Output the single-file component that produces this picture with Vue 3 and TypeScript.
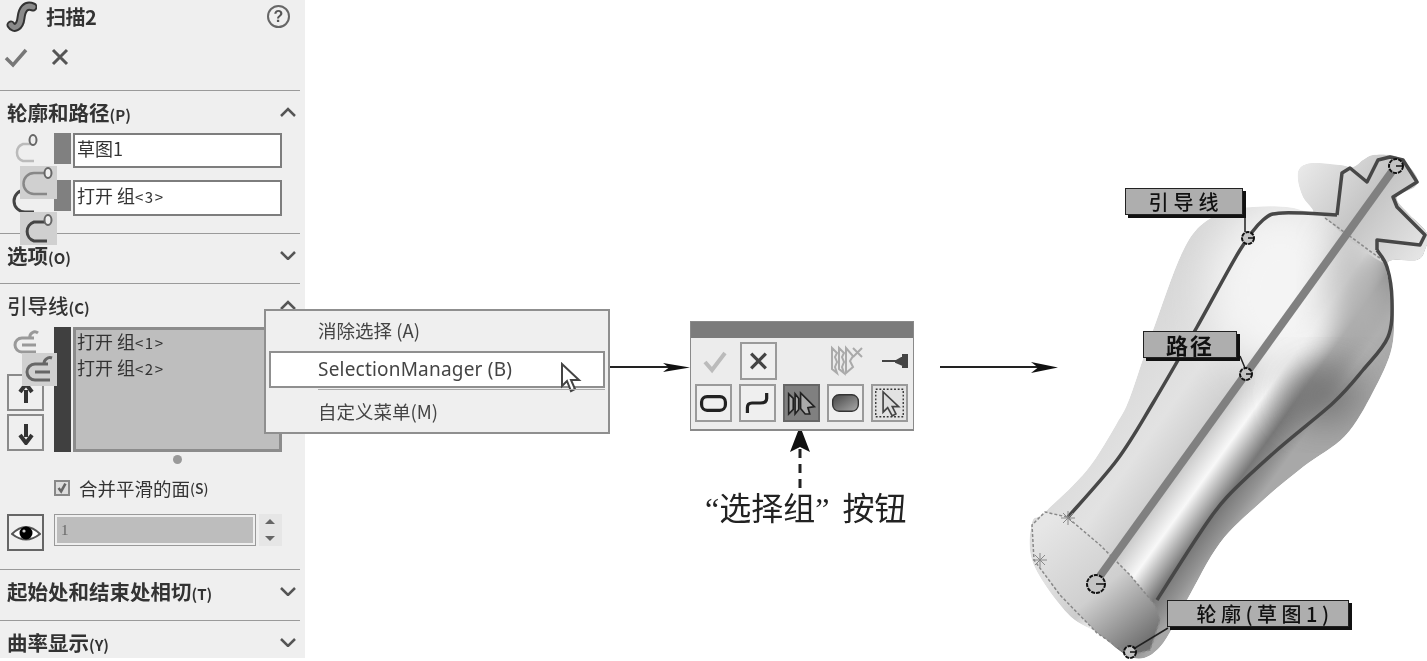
<script setup lang="ts">
type Pt = [number, number]
interface Tag { text: string; cls: string }

function smooth(pts: Pt[], closed = false): string {
  const n = pts.length
  const at = (i: number): Pt => (closed ? pts[(i + n) % n] : pts[Math.max(0, Math.min(n - 1, i))])
  let d = `M${pts[0][0]} ${pts[0][1]}`
  const end = closed ? n : n - 1
  for (let i = 0; i < end; i++) {
    const [p0, p1, p2, p3] = [at(i - 1), at(i), at(i + 1), at(i + 2)]
    const c1: Pt = [p1[0] + (p2[0] - p0[0]) / 6, p1[1] + (p2[1] - p0[1]) / 6]
    const c2: Pt = [p2[0] - (p3[0] - p1[0]) / 6, p2[1] - (p3[1] - p1[1]) / 6]
    d += ` C${c1[0].toFixed(1)} ${c1[1].toFixed(1)} ${c2[0].toFixed(1)} ${c2[1].toFixed(1)} ${p2[0]} ${p2[1]}`
  }
  return d + (closed ? ' Z' : '')
}

const tags: Tag[] = [
  { text: '引导线', cls: 'tag-a' },
  { text: '路径', cls: 'tag-b' },
  { text: '轮廓(草图1)', cls: 'tag-c' },
]
const handles = [
  { x: 1396, y: 166, r: 7 },
  { x: 1248, y: 238, r: 6 },
  { x: 1246, y: 374, r: 6 },
  { x: 1096, y: 584, r: 9 },
  { x: 1130, y: 652, r: 6 },
]
const silhouette = smooth([
  [1313, 212], [1303, 197], [1298, 180], [1300, 168], [1313, 163], [1340, 165], [1353, 167], [1363, 160],
  [1373, 155], [1390, 155], [1403, 160], [1417, 177], [1415, 187], [1397, 197], [1407, 212], [1427, 233],
  [1425, 250], [1417, 260], [1387, 263], [1393, 300], [1392, 347], [1373, 392], [1345, 436], [1303, 467],
  [1260, 503], [1220, 543], [1187, 600], [1160, 647], [1133, 658], [1097, 633], [1067, 613], [1033, 563],
  [1032, 523], [1045, 512], [1087, 470], [1117, 423], [1130, 397], [1153, 330], [1187, 243], [1220, 213],
  [1253, 207], [1287, 207],
], true)
const lip = smooth([
  [1313, 212], [1303, 197], [1298, 180], [1300, 168], [1313, 163], [1340, 165], [1353, 167], [1363, 160],
  [1373, 155], [1390, 155], [1403, 160], [1417, 177], [1415, 187], [1397, 197], [1407, 212], [1427, 233],
  [1425, 250], [1417, 260], [1387, 264], [1350, 240], [1325, 218],
], true)
const guideLeft = smooth([[1068, 517], [1117, 460], [1153, 403], [1197, 327], [1240, 250], [1263, 220], [1283, 213], [1337, 215]])
const guideLip = 'M1337 215 L1342 173 L1350 168 L1367 182 L1378 160 L1390 157 L1403 160 L1417 182 L1393 197 L1397 207 L1425 235 L1420 245 L1377 240 L1377 250'
const guideRight = smooth([[1377, 250], [1387, 267], [1392, 300], [1388, 337], [1363, 370], [1333, 403], [1277, 450], [1227, 497], [1200, 533], [1157, 600]])
const capEdge = 'M1067 517 L1045 512 L1032 525 L1034 560 L1060 595 L1097 633 L1130 655 L1150 650 L1160 620 L1155 605 L1130 575 L1100 545 Z'
</script>

<template>
  <div class="page">
    <aside class="panel">
      <header class="head">
        <svg class="sweep" viewBox="0 0 32 32">
          <path class="sweep-o" d="M6 25 C9 30 15 27 16 18 C17 9 21 4 28 7" />
          <path class="sweep-i" d="M6 25 C9 30 15 27 16 18 C17 9 21 4 28 7" />
        </svg>
        <span class="title">扫描2</span>
        <span class="help">?</span>
      </header>
      <div class="actions">
        <svg class="act" viewBox="0 0 24 24"><path class="ok" d="M2 13 L9 20 L22 5" /></svg>
        <svg class="act" viewBox="0 0 24 24"><path class="no" d="M4 5 L18 19 M18 5 L4 19" /></svg>
      </div>

      <section class="sec sec-profile">
        <div class="sec-head"><b>轮廓和路径<small>(P)</small></b><svg class="chev" viewBox="0 0 16 10"><path d="M1 9 L8 2 L15 9" /></svg></div>
        <div class="field-row">
          <svg class="tool" viewBox="0 0 30 30"><path class="c-light" d="M24 11 H13 A9 9 0 0 0 13 28 H24" /><ellipse class="ring" cx="23" cy="7" rx="3.5" ry="5" /></svg>
          <span class="swatch"></span>
          <span class="input">草图1</span>
        </div>
        <div class="field-row row-2">
          <svg class="tool tool-dark" viewBox="0 0 30 30"><path class="c-dark" d="M22 4 H15 A10 10 0 0 0 15 26 H24" /></svg>
          <span class="swatch"></span>
          <span class="input">打开 组<small>&lt;3&gt;</small></span>
          <svg class="ghost ghost-1" viewBox="0 0 37 33"><path class="c-mid" d="M27 7 H14 A10 10 0 0 0 14 28 H27" /><ellipse class="ring" cx="28" cy="7" rx="3.5" ry="5" /></svg>
          <svg class="ghost ghost-2" viewBox="0 0 37 33"><path class="c-dark" d="M27 10 H14 A10 10 0 0 0 14 29 H27" /><ellipse class="ring" cx="28" cy="8" rx="3.5" ry="5" /></svg>
        </div>
      </section>

      <section class="sec sec-opt">
        <div class="sec-head"><b>选项<small>(O)</small></b><svg class="chev" viewBox="0 0 16 10"><path d="M1 2 L8 9 L15 2" /></svg></div>
      </section>

      <section class="sec sec-guide">
        <div class="sec-head"><b class="thin">引导线<small>(C)</small></b><svg class="chev" viewBox="0 0 16 10"><path d="M1 9 L8 2 L15 9" /></svg></div>
        <div class="guide-body">
          <div class="side">
            <svg class="clip" viewBox="0 0 30 30"><path class="clip-l" d="M24 11 H12 A6 6 0 0 0 12 25 H26 M12 18 H26 M20 11 A5 5 0 0 1 28 6" /></svg>
            <button class="sq"><svg viewBox="0 0 20 24"><path class="arrow-i" d="M10 22 V9 M4 11 L10 3 L16 11" /></svg></button>
            <button class="sq"><svg viewBox="0 0 20 24"><path class="arrow-i" d="M10 3 V16 M4 14 L10 22 L16 14" /></svg></button>
            <svg class="ghost ghost-3" viewBox="0 0 35 33"><path class="clip-d" d="M26 11 H13 A7 7 0 0 0 13 27 H28 M13 19 H28 M22 11 A6 6 0 0 1 30 5" /></svg>
          </div>
          <span class="bar"></span>
          <div class="list"><div>打开 组<small>&lt;1&gt;</small></div><div>打开 组<small>&lt;2&gt;</small></div></div>
        </div>
        <span class="dot"></span>
        <label class="check"><span class="box"><svg viewBox="0 0 14 14"><path d="M3 7 L6 11 L11 2" /></svg></span>合并平滑的面<small>(S)</small></label>
        <div class="eye-row">
          <button class="sq eye"><svg viewBox="0 0 30 20"><path class="eye-w" d="M1 11 Q15 -3 29 11 Q15 22 1 11 Z" /><circle cx="15" cy="10" r="6.5" /><circle class="glint" cx="13" cy="8" r="1.6" /></svg></button>
          <span class="spin-input">1</span>
          <span class="spin"><i class="up"></i><i class="down"></i></span>
        </div>
      </section>

      <section class="sec sec-tan">
        <div class="sec-head"><b>起始处和结束处相切<small>(T)</small></b><svg class="chev" viewBox="0 0 16 10"><path d="M1 2 L8 9 L15 2" /></svg></div>
      </section>
      <section class="sec sec-curv">
        <div class="sec-head"><b>曲率显示<small>(Y)</small></b><svg class="chev" viewBox="0 0 16 10"><path d="M1 2 L8 9 L15 2" /></svg></div>
      </section>
    </aside>

    <main class="canvas">
      <div class="menu">
        <div class="item">消除选择 (A)</div>
        <div class="item hot">SelectionManager (B)
          <svg class="cursor" viewBox="0 0 22 32"><path d="M2 2 V24 L7 19 L11 29 L15 27 L11 18 L19 18 Z" /></svg>
        </div>
        <div class="item last">自定义菜单(M)</div>
      </div>

      <svg class="arrows" viewBox="0 0 1122 661">
        <path class="a-line" d="M305 367 H375" />
        <path class="a-head" d="M358 363 L385 367.500 L358 372 L364 367.500 Z" />
        <path class="a-line" d="M635 367 H735" />
        <path class="a-head" d="M726 362 L753 367.500 L726 373 L733 367.500 Z" />
        <path class="a-dash" d="M495 488 V448" />
        <path class="a-head" d="M495 426 L505 452 L495 447 L485 452 Z" />
      </svg>

      <div class="bar-tool">
        <div class="bar-top"></div>
        <div class="bar-row">
          <svg class="ti ti-ok" viewBox="0 0 36 36"><path d="M8 19 L15 27 L28 10" /></svg>
          <span class="tb x"><svg viewBox="0 0 36 36"><path d="M10 10 L26 26 M26 10 L10 26" /></svg></span>
          <svg class="ti ti-multi" viewBox="0 0 36 36"><path d="M3 5 L8 10 L6 14 L8 19 L6 24 L8 30 L3 26 Z M10 5 L15 10 L13 14 L15 19 L13 24 L15 30 L10 26 Z M17 5 L24 13 L21 18 L24 24 L17 30 Z M24 5 L33 14 M33 5 L24 14" /></svg>
          <svg class="ti ti-pin" viewBox="0 0 36 36"><path class="pin" d="M2 18 H16 M16 18 L23 14 V12 H27 V24 H23 V22 L16 19 Z" /></svg>
        </div>
        <div class="bar-row row-b">
          <span class="tb"><svg viewBox="0 0 36 36"><rect class="rr" x="5" y="11" width="26" height="15" rx="6" /></svg></span>
          <span class="tb"><svg viewBox="0 0 36 36"><path class="rr-s" d="M7 29 V23 Q7 18 12 18 H21 Q28 18 28 13 V7" /></svg></span>
          <span class="tb on"><svg viewBox="0 0 36 36"><path class="multi" d="M4 8 L9 13 V25 L4 30 Z M11 8 L15 13 V25 L11 30 Z M17 7 L32 22 L25 23 L27 30 L22 30 L17 24 Z" /></svg></span>
          <span class="tb"><svg viewBox="0 0 36 36"><defs><linearGradient id="solid" x1="0" y1="0" x2="1" y2="1"><stop offset="0" stop-color="#444" /><stop offset="1" stop-color="#aaa" /></linearGradient></defs><rect class="rr-f" x="4" y="9" width="28" height="18" rx="7" fill="url(#solid)" /></svg></span>
          <span class="tb sel"><svg viewBox="0 0 36 36"><rect class="dash" x="3" y="3" width="30" height="30" /><path class="ptr" d="M11 6 V28 L16 23 L21 32 L25 30 L21 22 L28 22 Z" /></svg></span>
        </div>
      </div>
      <div class="caption">“选择组” 按钮</div>

      <svg class="vase" viewBox="1020 150 407 511">
        <defs>
          <linearGradient id="body" gradientUnits="userSpaceOnUse" x1="1130" y1="320" x2="1300" y2="442">
            <stop offset="0" stop-color="#d6d6d6" />
            <stop offset=".4" stop-color="#e2e2e2" />
            <stop offset=".62" stop-color="#cccccc" />
            <stop offset=".73" stop-color="#f8f8f8" />
            <stop offset=".87" stop-color="#787878" />
            <stop offset=".95" stop-color="#939393" />
            <stop offset="1" stop-color="#a8a8a8" />
          </linearGradient>
          <linearGradient id="cap" gradientUnits="userSpaceOnUse" x1="1050" y1="520" x2="1150" y2="640">
            <stop offset="0" stop-color="#e6e6e6" />
            <stop offset=".55" stop-color="#cfcfcf" />
            <stop offset="1" stop-color="#707070" />
          </linearGradient>
          <linearGradient id="lip" gradientUnits="userSpaceOnUse" x1="1300" y1="170" x2="1420" y2="260">
            <stop offset="0" stop-color="#e8e8e8" />
            <stop offset=".5" stop-color="#c4c4c4" />
            <stop offset="1" stop-color="#e6e6e6" />
          </linearGradient>
          <clipPath id="clip-vase"><path :d="silhouette" /></clipPath>
          <filter id="soft" x="-60%" y="-60%" width="220%" height="220%"><feGaussianBlur stdDeviation="20" /></filter>
        </defs>
        <g clip-path="url(#clip-vase)">
          <path :d="silhouette" fill="url(#body)" />
          <ellipse cx="1280" cy="290" rx="70" ry="85" fill="#f4f4f4" filter="url(#soft)" />
          <ellipse cx="1362" cy="295" rx="30" ry="60" fill="#b4b4b4" filter="url(#soft)" />
          <ellipse cx="1325" cy="395" rx="36" ry="26" fill="#707070" filter="url(#soft)" />
          <path :d="lip" fill="url(#lip)" />
          <path :d="capEdge" fill="url(#cap)" />
        </g>
        <path class="cap-dot" :d="capEdge" />
        <path class="cap-dot" d="M1325 218 L1385 262" />
        <path class="path-line" d="M1100 576 L1393 170" />
        <path class="guide-line" :d="guideLeft" />
        <path class="guide-line" :d="guideLip" />
        <path class="guide-line" :d="guideRight" />
        <path class="leader" d="M1245 213 V232 M1240 356 L1245 368 M1168 628 L1135 648" />
        <path class="star" d="M1061 518 L1075 518 M1068 511 L1068 525 M1063 513 L1073 523 M1073 513 L1063 523 M1033 560 L1047 560 M1040 553 L1040 567 M1035 555 L1045 565 M1045 555 L1035 565" />
        <g v-for="h in handles" :key="h.x">
          <circle class="handle" :cx="h.x" :cy="h.y" :r="h.r" />
          <path class="tick" :d="`M${h.x} ${h.y} h${h.r}`" />
        </g>
      </svg>
      <div v-for="t in tags" :key="t.text" class="tag" :class="t.cls">{{ t.text }}</div>
    </main>
  </div>
</template>

<style scoped>
.page { position: relative; display: flex; width: 1427px; height: 661px; overflow: hidden; background: #fff; font-family: "Noto Sans CJK SC", "Noto Sans", sans-serif; color: #333; filter: blur(0.5px); }
.panel { width: 305px; height: 658px; flex: none; background: #efefef; box-sizing: border-box; overflow: hidden; }
.head { display: flex; align-items: center; height: 32px; padding: 0 15px 0 5px; }
.sweep { width: 32px; height: 32px; margin-right: 9px; }
.sweep-o { fill: none; stroke: #333; stroke-width: 9; stroke-linecap: round; }
.sweep-i { fill: none; stroke: #8a8a8a; stroke-width: 5; stroke-linecap: round; }
.title { flex: 1; font-size: 20px; font-weight: 700; letter-spacing: -.5px; }
.help { width: 19px; height: 19px; border: 2px solid #666; border-radius: 50%; text-align: center; font: 700 16px/19px "Liberation Sans", sans-serif; color: #555; }
.actions { display: flex; gap: 21px; padding: 13px 0 0 4px; box-sizing: border-box; border-bottom: 1px solid #9a9a9a; margin-right: 5px; height: 59px; }
.act { width: 24px; height: 24px; }
.ok { fill: none; stroke: #777; stroke-width: 3.500; }
.no { fill: none; stroke: #555; stroke-width: 3; }
.sec { border-bottom: 1px solid #9a9a9a; margin-right: 5px; position: relative; box-sizing: border-box; }
.sec-head { display: flex; align-items: center; justify-content: space-between; padding: 0 4px 0 7px; height: 42px; font-size: 20.500px; letter-spacing: 0; color: #333; white-space: nowrap; }
.sec-head b { font-weight: 700; }
.sec-head b.thin { font-weight: 500; }
.sec-head small { font-size: 15px; font-weight: 700; letter-spacing: 0; }
.chev { width: 16px; height: 10px; }
.chev path { fill: none; stroke: #555; stroke-width: 2.500; }
.sec-profile { height: 143px; }
.sec-opt { height: 50px; }
.sec-guide { height: 286px; }
.sec-tan { height: 51px; }
.sec-curv { height: 38px; border-bottom: 0; }
.field-row { display: flex; position: relative; height: 35px; padding-left: 10px; }
.row-2 { margin-top: 12px; height: 36px; }
.tool { width: 30px; height: 30px; margin-right: 14px; }
.tool-dark { margin-top: 6px; }
.c-light, .c-mid, .c-dark, .clip-l, .clip-d { fill: none; stroke-width: 2.500; }
.c-light { stroke: #bbb; }
.c-mid { stroke: #888; }
.c-dark { stroke: #444; stroke-width: 3; }
.ring { fill: #eee; stroke: #666; stroke-width: 2; }
.clip-l { stroke: #999; stroke-width: 3; }
.clip-d { stroke: #666; stroke-width: 3; }
.swatch { width: 17px; height: 31px; background: #808080; margin-right: 2px; flex: none; }
.input { width: 209px; box-sizing: border-box; border: 2px solid #7d7d7d; background: #fff; padding-left: 2px; font-size: 18px; line-height: 27px; color: #333; white-space: nowrap; }
.input small, .list small { font-size: 15px; letter-spacing: 1.500px; }
.ghost { position: absolute; background: #d0d0d0; }
.ghost-1 { left: 20px; top: -14px; width: 37px; height: 33px; }
.ghost-2 { left: 20px; top: 32px; width: 37px; height: 33px; }
.ghost-3 { left: 15px; top: 26px; width: 35px; height: 33px; }
.guide-body { display: flex; height: 125px; position: relative; margin-top: 1px; padding-left: 7px; }
.side { width: 47px; position: relative; display: flex; flex-direction: column; gap: 3px; }
.clip { width: 30px; height: 30px; margin: 0 0 14px 3px; flex: none; }
.sq { width: 37px; height: 37px; flex: none; padding: 0; box-sizing: border-box; background: #efefef; border: 2px solid #8a8a8a; display: flex; align-items: center; justify-content: center; }
.sq svg { width: 20px; height: 24px; }
.arrow-i { fill: none; stroke: #333; stroke-width: 4; }
.bar { width: 17px; background: #404040; margin-right: 2px; }
.list { width: 209px; box-sizing: border-box; background: #bebebe; border: 3px solid #8c8c8c; padding: 0 0 0 1px; font-size: 18px; color: #333; white-space: nowrap; }
.list div { height: 26px; line-height: 22px; }
.dot { display: block; width: 9px; height: 9px; border-radius: 50%; background: #999; margin: 3px 0 0 173px; }
.check { display: flex; align-items: center; margin: 12px 0 0 54px; height: 24px; font-size: 18.500px; color: #333; white-space: nowrap; }
.check small { font-size: 14px; font-weight: 500; }
.box { width: 16px; height: 16px; box-sizing: border-box; border: 2px solid #888; background: #ddd; margin-right: 9px; }
.box svg { display: block; width: 12px; height: 12px; }
.box path { fill: none; stroke: #666; stroke-width: 3; }
.eye-row { display: flex; align-items: flex-start; margin: 14px 0 0 7px; }
.eye { border-width: 2px; border-color: #666; margin-right: 10px; }
.eye svg { width: 30px; height: 20px; }
.eye-w { fill: #fff; stroke: #555; stroke-width: 2; }
.glint { fill: #ccc; }
.spin-input { width: 202px; height: 32px; box-sizing: border-box; background: #bdbdbd; border: 3px solid #efefef; outline: 1px solid #999; outline-offset: -1px; padding-left: 4px; font: 15px/26px "Liberation Serif", serif; color: #666; }
.spin { width: 23px; height: 32px; margin-left: 3px; display: flex; flex-direction: column; background: #e6e6e6; gap: 2px; }
.spin i { flex: 1; position: relative; }
.spin i::after { content: ""; position: absolute; left: 6px; top: 5px; border-left: 5px solid transparent; border-right: 5px solid transparent; }
.up::after { border-bottom: 5px solid #666; }
.down::after { border-top: 5px solid #666; }

.canvas { position: relative; flex: 1; }
.menu { position: absolute; left: -41px; top: 309px; width: 346px; height: 125px; box-sizing: border-box; background: #efefef; border: 2px solid #8f8f8f; padding: 0 3px; color: #444; font-size: 18.500px; z-index: 2; white-space: nowrap; }
.item { height: 38px; line-height: 38px; padding-left: 49px; }
.hot { position: relative; height: 37px; line-height: 33px; background: #fff; border: 2px solid #8f8f8f; box-sizing: border-box; padding-left: 47px; font-family: "Noto Sans", sans-serif; font-size: 19px; letter-spacing: .2px; margin-top: 2px; }
.hot::after { content: ""; position: absolute; left: 47px; right: -2px; top: 36px; height: 1px; background: #aaa; }
.last { margin-top: 4px; }
.cursor { position: absolute; right: 21px; top: 9px; width: 22px; height: 32px; }
.cursor path { fill: #fff; stroke: #444; stroke-width: 2; }
.arrows { position: absolute; inset: 0; width: 1122px; height: 661px; }
.a-line { stroke: #222; stroke-width: 2; fill: none; }
.a-head { fill: #111; }
.a-dash { stroke: #222; stroke-width: 3; stroke-dasharray: 9 6; fill: none; }
.bar-tool { position: absolute; left: 385px; top: 321px; width: 224px; height: 110px; box-sizing: border-box; background: #ececec; border: 1px solid #8a8a8a; border-bottom-width: 2px; }
.bar-top { height: 16px; background: #7b7b7b; }
.bar-row { display: flex; align-items: center; height: 46px; padding-left: 4px; }
.row-b { height: 40px; gap: 7px; margin-top: -1px; }
.ti { width: 36px; height: 36px; flex: none; }
.tb { width: 37px; height: 38px; box-sizing: border-box; flex: none; border: 2px solid #9a9a9a; display: flex; align-items: center; justify-content: center; background: #efefef; }
.tb svg { width: 34px; height: 34px; }
.tb.x { margin-left: 7px; }
.ti-ok { margin-left: 2px; }
.ti-ok path { fill: none; stroke: #bbb; stroke-width: 4; }
.x path { fill: none; stroke: #444; stroke-width: 3.500; }
.ti-multi { margin-left: 52px; }
.ti-multi path { fill: none; stroke: #aaa; stroke-width: 2; }
.ti-pin { margin-left: 15px; }
.pin { fill: #444; stroke: #444; stroke-width: 2; }
.rr { fill: none; stroke: #222; stroke-width: 3.500; }
.rr-s { fill: none; stroke: #222; stroke-width: 3.500; }
.rr-f { stroke: #333; stroke-width: 1.500; }
.on { background: #808080; border-color: #666; }
.multi { fill: #aaa; stroke: #222; stroke-width: 1.800; }
.sel { background: #e2e2e2; }
.dash { fill: none; stroke: #333; stroke-width: 1.500; stroke-dasharray: 2 2; }
.ptr { fill: #ddd; stroke: #444; stroke-width: 1.800; }
.caption { position: absolute; left: 400px; top: 485px; font: 32px/48px "Liberation Serif", "Noto Sans CJK SC", serif; word-spacing: 5px; color: #222; white-space: nowrap; }
.vase { position: absolute; left: 715px; top: 150px; width: 407px; height: 511px; }
.cap-dot { fill: none; stroke: #888; stroke-width: 1.500; stroke-dasharray: 3 2; }
.path-line { stroke: #808080; stroke-width: 8; fill: none; }
.guide-line { stroke: #474747; stroke-width: 3.500; fill: none; stroke-linejoin: round; }
.leader { stroke: #222; stroke-width: 1.500; fill: none; }
.star { stroke: #888; stroke-width: 1; fill: none; }
.handle { fill: #c4c4c4; stroke: #111; stroke-width: 2; stroke-dasharray: 4 1; }
.tick { stroke: #111; stroke-width: 1.500; }
.tag { position: absolute; box-sizing: border-box; background: #aeaeae; border: 1px solid #222; box-shadow: 3px 3px 0 #111; text-align: center; color: #111; white-space: nowrap; font-size: 20px; font-weight: 500; line-height: 25px; }
.tag-a { left: 820px; top: 188px; width: 118px; height: 27px; letter-spacing: 5px; padding-left: 4px; }
.tag-b { left: 838px; top: 331px; width: 94px; height: 27px; font-size: 22px; font-weight: 700; letter-spacing: 2px; }
.tag-c { left: 862px; top: 600px; width: 182px; height: 27px; padding-left: 14px; letter-spacing: 4.500px; }
</style>
<style>
html, body { margin: 0; background: #fff; }
</style>
